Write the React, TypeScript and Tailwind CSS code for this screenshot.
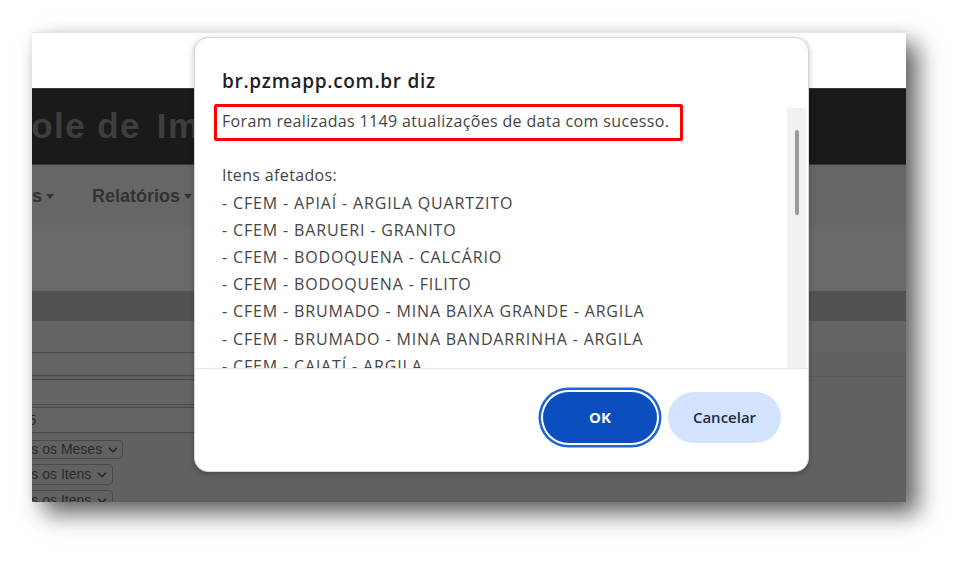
import { ChevronDown } from 'lucide-react'

const itens = [
  '- CFEM - APIAÍ - ARGILA QUARTZITO',
  '- CFEM - BARUERI - GRANITO',
  '- CFEM - BODOQUENA - CALCÁRIO',
  '- CFEM - BODOQUENA - FILITO',
  '- CFEM - BRUMADO - MINA BAIXA GRANDE - ARGILA',
  '- CFEM - BRUMADO - MINA BANDARRINHA - ARGILA',
  '- CFEM - CAJATÍ - ARGILA',
  '- CFEM - CAJATÍ - CALCÁRIO',
]

function Caret() {
  return <span className="ml-[4px] inline-block border-x-[4px] border-t-[5px] border-x-transparent border-t-[#333333] align-middle" />
}

function PaginaFundo() {
  return (
    <div className="flex h-full flex-col font-['Liberation_Sans',sans-serif]">
      <div className="h-[56px] shrink-0 border-t border-[#e6e6e6] bg-white" />
      <div className="flex h-[77px] shrink-0 items-center overflow-hidden border-y border-[#3a3a3a] bg-[#1a1a1a]">
        <h1 className="-ml-[101px] whitespace-nowrap text-[35px] font-bold tracking-[1.4px] text-[#3e3e3e]">
          Controle de<span className="ml-[16px]">Importação</span>
        </h1>
      </div>
      <div className="flex h-[62px] shrink-0 items-center bg-[#666666] text-[18px] font-bold text-[#333333]">
        <span className="-ml-[78px] whitespace-nowrap">
          Cadastros
          <Caret />
        </span>
        <span className="ml-[38px] whitespace-nowrap">
          Relatórios
          <Caret />
        </span>
      </div>
      <div className="h-[64px] shrink-0 bg-[#696969]" />
      <div className="h-[30px] shrink-0 bg-[#525252]" />
      <div className="h-[31px] shrink-0 bg-[#646464]" />
      <div className="flex flex-1 flex-col bg-[#616161]">
        <div className="h-[24px] w-[600px] border-y border-[#4a4a4a] bg-[#646464]" />
        <div className="h-[1px] border-b border-[#5a5a5a]" />
        <div className="mt-[2px] h-[26px] w-[600px] border-y border-[#4a4a4a] bg-[#646464]" />
        <div className="mt-[2px] flex h-[26px] w-[600px] items-center border-y border-[#4a4a4a] bg-[#646464] text-[15px] text-[#2a2a2a]">
          <span className="-ml-[4px]">5</span>
        </div>
        <div className="mt-[7px] flex flex-col gap-[5px] text-[14px] text-[#2a2a2a]">
          <div className="-ml-[40px] flex h-[19px] w-[131px] items-center gap-1 rounded-sm border border-[#4a4a4a] pl-2">
            Todos os Meses <ChevronDown className="h-3.5 w-3.5" strokeWidth={3} />
          </div>
          <div className="-ml-[40px] flex h-[21px] w-[121px] items-center gap-1 rounded-sm border border-[#4a4a4a] pl-2">
            Todos os Itens <ChevronDown className="h-3.5 w-3.5" strokeWidth={3} />
          </div>
          <div className="-ml-[40px] flex h-[21px] w-[121px] items-center gap-1 rounded-sm border border-[#4a4a4a] pl-2">
            Todos os Itens <ChevronDown className="h-3.5 w-3.5" strokeWidth={3} />
          </div>
        </div>
      </div>
    </div>
  )
}

function Alerta() {
  return (
    <div className="absolute left-[162px] top-[5px] flex h-[435px] w-[615px] flex-col rounded-[14px] border border-[#d6d6d6] bg-white font-['Open_Sans',sans-serif] shadow-[0_2px_6px_rgba(0,0,0,0.25)]">
      <h2 className="pl-[27px] pt-[31px] text-[19px] font-semibold leading-[24px] tracking-[0.7px] text-[#1f1f1f]">
        br.pzmapp.com.br diz
      </h2>
      <div className="mt-[15px] flex h-[261px] border-b border-[#dce7fa]">
        <div className="flex-1 overflow-hidden whitespace-nowrap pl-[27px] text-[16px] leading-[27.2px] tracking-[0.85px] text-[#454545]">
          <p className="tracking-[0.35px]">Foram realizadas 1149 atualizações de data com sucesso.</p>
          <p>&nbsp;</p>
          <p className="tracking-[0.35px]">Itens afetados:</p>
          {itens.map((i) => (
            <p key={i}>{i}</p>
          ))}
        </div>
        <div className="mr-[2px] w-[19px] bg-[#f1f1f1] pt-[22px]">
          <div className="mx-auto h-[85px] w-[4px] rounded-full bg-[#9a9a9a]" />
        </div>
      </div>
      <div className="flex justify-end gap-[11px] pr-[27px] pt-[23px]">
        <button
          type="button"
          className="h-[51px] w-[114px] rounded-full bg-[#0b4ebe] text-[15px] font-bold text-white ring-[2.5px] ring-[#1c63d6] ring-offset-2 ring-offset-white"
        >
          OK
        </button>
        <button
          type="button"
          className="h-[51px] w-[113px] rounded-full bg-[#d3e3fd] text-[15px] font-semibold text-[#1d2b48]"
        >
          Cancelar
        </button>
      </div>
      {/* marcação em vermelho sobre a mensagem */}
      <div className="pointer-events-none absolute left-[19px] top-[66px] h-[37px] w-[469px] rounded-[2px] border-[3px] border-[#ff0000]" />
    </div>
  )
}

export default function App() {
  return (
    <div className="h-[568px] w-[971px] overflow-hidden bg-white pl-[32px] pt-[32px]">
      <div className="relative h-[470px] w-[874px] overflow-hidden shadow-[0_0_10px_rgba(0,0,0,0.08),12px_12px_22px_rgba(0,0,0,0.6)]">
        <PaginaFundo />
        <Alerta />
      </div>
    </div>
  )
}
